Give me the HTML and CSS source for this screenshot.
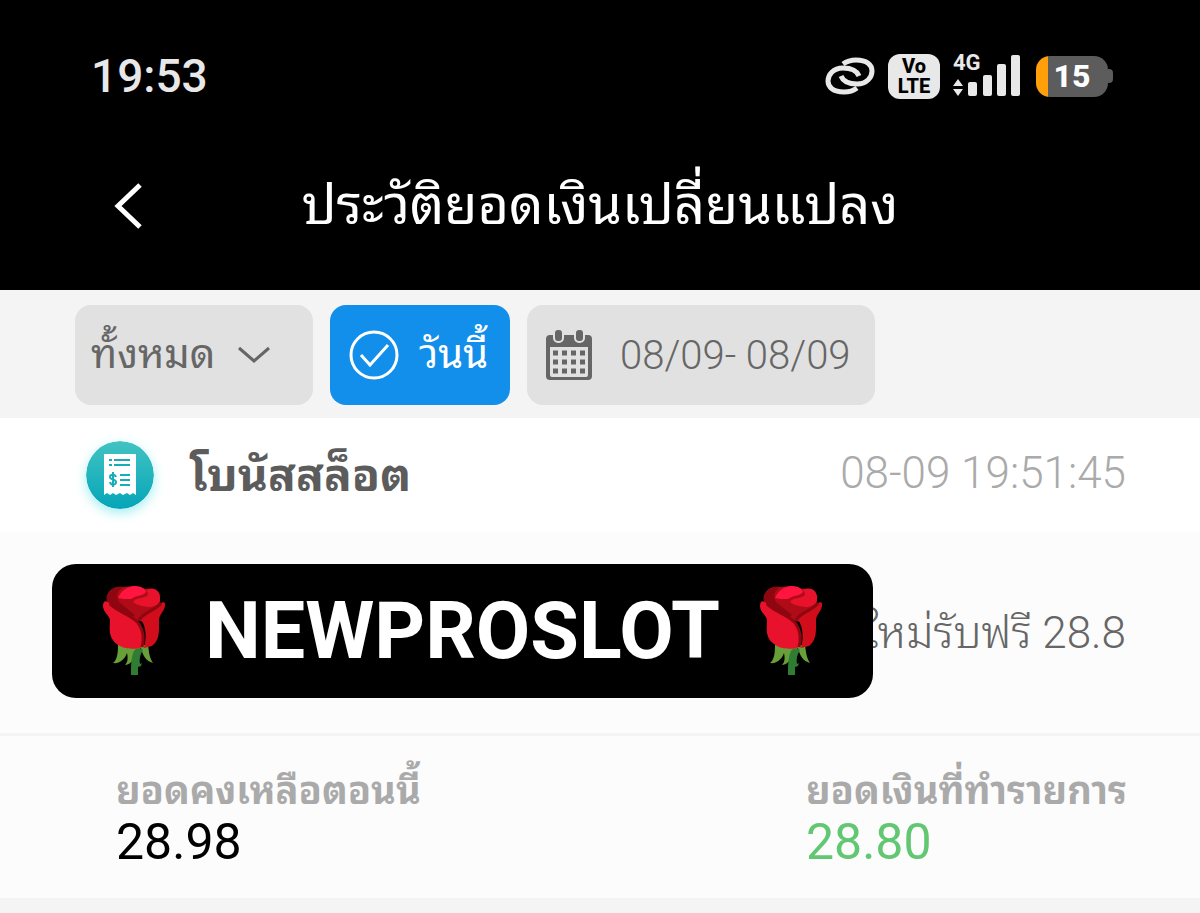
FILE: index.html
```
<!DOCTYPE html>
<html lang="th">
<head>
<meta charset="utf-8">
<meta name="viewport" content="width=device-width, initial-scale=1">
<title>ประวัติยอดเงินเปลี่ยนแปลง</title>
<link rel="stylesheet" href="styles.css">
</head>
<body>
<svg class="defs" width="0" height="0" aria-hidden="true">
  <symbol id="rose" viewBox="0 0 62 90">
    <path fill="#689f38" d="M15 59C15 68 14 74 10 77c7 1 12-4 14-10 1 5 1 9-2 12 7-1 10-7 11-14l5-3c2 8 5 13 12 15-4-6-4-12-5-18z"/>
    <path fill="#2e7d32" d="M31 65c2-3 7-3 9-1-3 5-4 9-3 14l2-1-1 3-3 1 0 8h-7c0-9 0-18 3-24z"/>
    <path fill="#b00c17" d="M4 10C6 3 13 0 20 1l12-1 10 3c9-1 16 4 15 12l-2 6-11 16-23-6L6 18c-2-3-3-6-2-8z"/>
    <path fill="#8f0610" d="M4 10C7 2 14 0 20 1c-6 4-7 9-4 15L32 29l-4 3L12 22C4 18 3 13 4 10z"/>
    <path fill="#ff1540" d="M15 12C18 5 24 0 32 0c6 0 11 3 11 6-3 4-9 3-15 7-5 0-9 0-13-1z"/>
    <path fill="#e8122d" d="M43 4c8-4 15 1 14 9 0 6-5 8-12 8-7-1-11-2-15-5 3-5 11-3 15-7 0-2-1-4-2-5z"/>
    <path fill="#d10d1b" d="M37 32c5-6 15-8 21-15 3-2 5 0 4 3-1 6-6 8-6 15 0 9 1 19-7 25l-8 2c3-12 2-22-4-30z"/>
    <path fill="#e8122d" d="M0 20c0-4 2-6 5-4 8 11 23 11 31 24 5 9 5 16 3 21-3 3-17 2-22-1C4 53 7 42 7 34c-1-5-7-8-7-14z"/>
    <path fill="none" stroke="#8f0610" stroke-width="3" d="M7 18c9 9 23 11 29 20 5 8 5 16 3 23M36 34c6-9 16-9 22-17"/>
  </symbol>
</svg>
<header class="top">
  <div class="status">
    <time class="clock">19:53</time>
    <div class="indicators">
      <svg class="link" viewBox="0 0 50 38" aria-hidden="true">
        <g fill="none" stroke="#e8e8e8" stroke-width="5">
          <path d="M18 7c4-3 7-4 13-4 11 0 16 5 16 11s-5 13-15 13c-8 0-14-3-16-8"/>
          <path d="M32 31c-4 3-7 4-13 4-11 0-16-5-16-11s5-13 15-13c8 0 14 3 16 8"/>
        </g>
      </svg>
      <span class="volte"><span>Vo</span><span>LTE</span></span>
      <span class="signal">
        <span class="net">4G</span>
        <svg viewBox="0 0 67 42" aria-hidden="true">
          <path fill="#e8e8e8" d="M0 31l5-7 5 7zM0 34h10l-5 7z"/>
          <g fill="#e8e8e8"><rect x="15" y="27" width="9" height="14" rx="2"/><rect x="30" y="20" width="9" height="21" rx="2"/><rect x="44" y="9" width="9" height="32" rx="2"/><rect x="58" y="0" width="9" height="41" rx="2"/></g>
        </svg>
      </span>
      <span class="battery">15</span>
    </div>
  </div>
  <nav class="titlebar">
    <button class="back" type="button" aria-label="กลับ">
      <svg viewBox="0 0 28 46" aria-hidden="true"><path fill="none" stroke="#fff" stroke-width="5" d="M26 2L4 23l22 21"/></svg>
    </button>
    <h1>ประวัติยอดเงินเปลี่ยนแปลง</h1>
  </nav>
</header>
<main>
  <section class="filters">
    <label class="chip kind">
      <select aria-label="ประเภท"><option>ทั้งหมด</option></select>
      <svg viewBox="0 0 32 18" aria-hidden="true"><path fill="none" stroke="#666" stroke-width="3" d="M1 2l15 13L31 2"/></svg>
    </label>
    <button class="chip today" type="button">
      <svg viewBox="0 0 50 50" aria-hidden="true"><g fill="none" stroke="#fff" stroke-width="3"><circle cx="25" cy="25" r="23"/><path d="M12 25l9 10 18-20"/></g></svg>
      <span>วันนี้</span>
    </button>
    <button class="chip range" type="button">
      <svg viewBox="0 0 46 50" aria-hidden="true">
        <path fill="#666" fill-rule="evenodd" d="M4 5h38q4 0 4 4v37q0 4-4 4H4q-4 0-4-4V9q0-4 4-4zM4 17v28q0 2 2 2h34q2 0 2-2V17z"/>
        <g fill="#666" stroke="#e1e1e1" stroke-width="2"><rect x="8" y="-1" width="9" height="13" rx="4"/><rect x="29" y="-1" width="9" height="13" rx="4"/></g>
        <path stroke="#666" stroke-width="5" stroke-dasharray="5 4" d="M7 23h32M7 32h32M7 41h32"/>
      </svg>
      <span>08/09- 08/09</span>
    </button>
  </section>
  <article class="entry">
    <header class="entry-head">
      <svg class="receipt" viewBox="0 0 68 68" aria-hidden="true">
        <defs><linearGradient id="teal" x2="0" y2="1"><stop stop-color="#42c3c2"/><stop offset="1" stop-color="#05a5b8"/></linearGradient></defs>
        <circle cx="34" cy="34" r="34" fill="url(#teal)"/>
        <path fill="#fff" d="M18 13h32v41l-3-2-3 2-3-2-4 2-3-2-4 2-3-2-3 2-3-2-3 2z"/>
        <path fill="none" stroke="#18acb8" stroke-width="2" d="M23 19h3M23 24h3M28 19h16M28 24h16M34 34h10M34 39h10M34 44h10"/>
        <path fill="none" stroke="#18acb8" stroke-width="2" d="M30 36c-1-3-6-3-6 0s6 2 6 5-5 4-6 0M27 31v15"/>
      </svg>
      <h2>โบนัสสล็อต</h2>
      <time>08-09 19:51:45</time>
    </header>
    <div class="note">
      <p>ใหม่รับฟรี 28.8</p>
      <div class="banner">
        <svg aria-hidden="true"><use href="#rose"/></svg>
        <strong>NEWPROSLOT</strong>
        <svg aria-hidden="true"><use href="#rose"/></svg>
      </div>
    </div>
    <dl class="totals">
      <div><dt>ยอดคงเหลือตอนนี้</dt><dd>28.98</dd></div>
      <div><dt>ยอดเงินที่ทำรายการ</dt><dd class="plus">28.80</dd></div>
    </dl>
  </article>
</main>
</body>
</html>
```
FILE: styles.css
```
* { box-sizing: border-box; }
body {
  margin: 0;
  background: #f4f4f4;
  color: #666;
  font-family: Roboto, "Noto Sans Thai Looped", Loma, Garuda, Waree, Umpush, sans-serif;
}
h1, h2, p, dl, dt, dd { margin: 0; }
button, select { font: inherit; color: inherit; border: 0; background: none; padding: 0; }
svg { display: block; flex: none; }
.defs { position: absolute; }

.top { background: #000; color: #fff; }
.status {
  display: flex;
  align-items: center;
  justify-content: space-between;
  height: 152px;
  padding: 0 87px 0 91px;
}
.clock { font-size: 46px; font-weight: 500; color: #e8e8e8; }
.indicators { display: flex; align-items: center; gap: 13px; color: #e8e8e8; }
.link { width: 50px; height: 38px; }
.volte {
  display: flex;
  flex-direction: column;
  align-items: center;
  justify-content: center;
  width: 52px;
  height: 45px;
  border-radius: 12px;
  background: #e8e8e8;
  color: #000;
  font-size: 20px;
  line-height: 20px;
  font-weight: 800;
}
.signal { position: relative; width: 67px; }
.signal svg { width: 67px; height: 42px; }
.net { position: absolute; top: -3px; left: 0; font-size: 22px; line-height: 22px; font-weight: 700; }
.battery {
  position: relative;
  width: 72px;
  height: 41px;
  margin: 0 5px 0 3px;
  border-radius: 14px;
  background: linear-gradient(90deg, #ff9f0a 12px, #5c5c5c 12px);
  color: #fff;
  font-size: 32px;
  line-height: 41px;
  font-weight: 800;
  text-align: center;
}
.battery::after {
  content: "";
  position: absolute;
  top: 13px;
  right: -5px;
  width: 5px;
  height: 14px;
  border-radius: 0 4px 4px 0;
  background: #5c5c5c;
}
.titlebar {
  display: grid;
  grid-template-columns: 1fr auto 1fr;
  align-items: center;
  padding: 14px 114px 44px;
}
.back { justify-self: start; }
.back svg { width: 28px; height: 46px; }
h1 { font-size: 54px; line-height: 80px; font-weight: 400; white-space: nowrap; }

.filters { display: flex; gap: 17px; padding: 15px 75px 13px; }
.chip {
  display: flex;
  align-items: center;
  height: 100px;
  border-radius: 16px;
  background: #e1e1e1;
  font-size: 40px;
  white-space: nowrap;
}
.kind { width: 238px; padding: 0 16px; gap: 22px; }
.kind select { appearance: none; height: 80px; line-height: 80px; overflow: visible; }
.kind svg { width: 32px; height: 18px; }
.today { width: 180px; padding: 0 19px; gap: 20px; background: #128eeb; color: #fff; line-height: 50px; }
.today svg { width: 50px; height: 50px; }
.range { width: 348px; padding: 0 19px; gap: 28px; font-weight: 300; }
.range svg { width: 46px; height: 50px; }

.entry { background: #fcfcfc; }
.entry-head {
  display: flex;
  align-items: center;
  height: 114px;
  padding: 0 74px 0 86px;
  background: #fff;
}
.receipt { width: 68px; height: 68px; margin-right: 36px; border-radius: 50%; box-shadow: 0 4px 12px #a5eef2; }
h2 { font-size: 46px; line-height: 70px; font-weight: 700; color: #5c5c5c; }
.entry-head time { margin-left: auto; padding-bottom: 5px; font-size: 44px; font-weight: 300; color: #aaa; }
.note {
  position: relative;
  display: flex;
  align-items: center;
  justify-content: flex-end;
  height: 204px;
  padding: 0 74px;
  border-bottom: 3px solid #f4f4f4;
  font-size: 44px;
  line-height: 48px;
  font-weight: 300;
}
.banner {
  position: absolute;
  top: 32px;
  left: 52px;
  display: flex;
  align-items: center;
  gap: 40px;
  height: 134px;
  padding: 0 51px;
  border-radius: 24px;
  background: #000;
  color: #fff;
  font-size: 79px;
}
.banner svg { width: 62px; height: 90px; }
.banner strong { font-weight: 700; }
.totals { display: flex; justify-content: space-between; height: 162px; padding: 30px 73px 0 116px; }
dt { font-size: 38px; line-height: 50px; font-weight: 700; color: #aaa; }
dd { font-size: 50px; line-height: 52px; color: #000; }
.plus { color: #62c772; }
```
